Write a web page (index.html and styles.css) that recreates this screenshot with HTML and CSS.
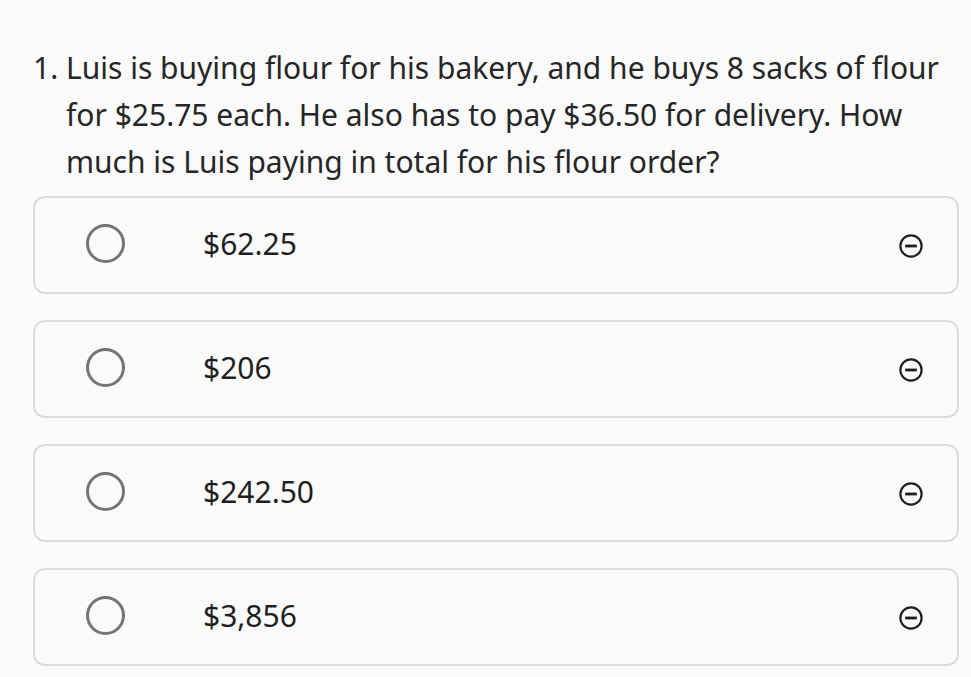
FILE: index.html
```html
<!DOCTYPE html>
<html lang="en">
<head>
<meta charset="utf-8">
<title>Question</title>
<link rel="stylesheet" href="styles.css">
</head>
<body>
<main class="quiz">
  <ol class="question">
    <li>Luis is buying flour for his bakery, and he buys 8 sacks of flour for $25.75 each. He also has to pay $36.50 for delivery. How much is Luis paying in total for his flour order?</li>
  </ol>
  <div class="options">
    <label class="option">
      <span class="radio"></span>
      <span class="answer">$62.25</span>
      <svg class="eliminate" viewBox="0 0 24 24" width="26" height="26"><circle cx="12" cy="12" r="9.8" fill="none" stroke="#1f1f1f" stroke-width="2"/><rect x="6.6" y="10.7" width="10.8" height="2.6" fill="#1f1f1f"/></svg>
    </label>
    <label class="option">
      <span class="radio"></span>
      <span class="answer">$206</span>
      <svg class="eliminate" viewBox="0 0 24 24" width="26" height="26"><circle cx="12" cy="12" r="9.8" fill="none" stroke="#1f1f1f" stroke-width="2"/><rect x="6.6" y="10.7" width="10.8" height="2.6" fill="#1f1f1f"/></svg>
    </label>
    <label class="option">
      <span class="radio"></span>
      <span class="answer">$242.50</span>
      <svg class="eliminate" viewBox="0 0 24 24" width="26" height="26"><circle cx="12" cy="12" r="9.8" fill="none" stroke="#1f1f1f" stroke-width="2"/><rect x="6.6" y="10.7" width="10.8" height="2.6" fill="#1f1f1f"/></svg>
    </label>
    <label class="option">
      <span class="radio"></span>
      <span class="answer">$3,856</span>
      <svg class="eliminate" viewBox="0 0 24 24" width="26" height="26"><circle cx="12" cy="12" r="9.8" fill="none" stroke="#1f1f1f" stroke-width="2"/><rect x="6.6" y="10.7" width="10.8" height="2.6" fill="#1f1f1f"/></svg>
    </label>
  </div>
</main>
</body>
</html>
```

FILE: styles.css
```css
html, body {
  margin: 0;
  padding: 0;
  background: #fafafa;
}

.quiz {
  padding: 44px 12px 0 33px;
  font-family: "Noto Sans", "Open Sans", sans-serif;
  color: #222;
}

.question {
  margin: 0 0 11px 0;
  padding: 0 0 0 33px;
  font-size: 30px;
  line-height: 47px;
  color: #262626;
}

.options {
  display: flex;
  flex-direction: column;
  gap: 26px;
}

.option {
  display: flex;
  align-items: center;
  height: 98px;
  box-sizing: border-box;
  border: 2px solid #dcdcdc;
  border-radius: 12px;
  padding: 0 33px 0 51px;
}

.radio {
  width: 39px;
  height: 39px;
  box-sizing: border-box;
  border: 3.5px solid #757575;
  border-radius: 50%;
  flex: none;
  margin-top: -3px;
}

.answer {
  margin-left: 78px;
  flex: 1;
  font-size: 30px;
  color: #1f1f1f;
  margin-top: -4px;
}

.eliminate {
  flex: none;
  margin-top: 2px;
}
```
